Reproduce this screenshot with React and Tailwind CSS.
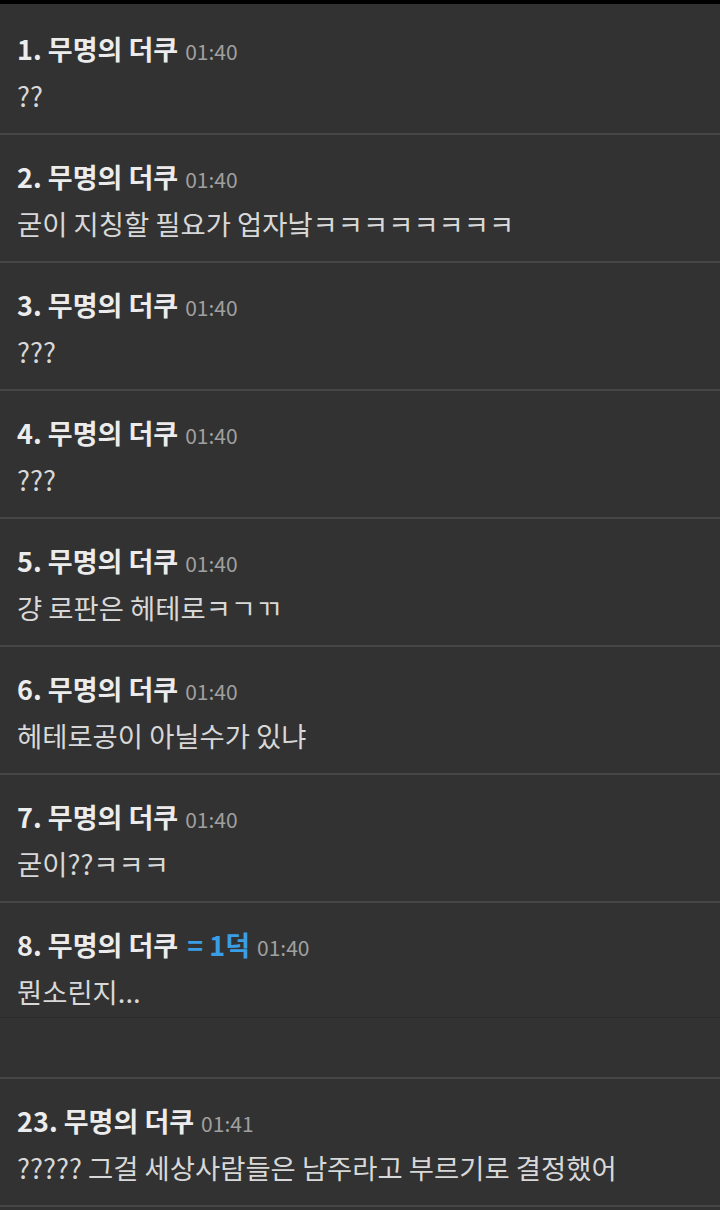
import React from "react";

const items = [
  { n: 1, time: "01:40", body: "??" },
  { n: 2, time: "01:40", body: "굳이 지칭할 필요가 업자낰ㅋㅋㅋㅋㅋㅋㅋㅋ" },
  { n: 3, time: "01:40", body: "???" },
  { n: 4, time: "01:40", body: "???" },
  { n: 5, time: "01:40", body: "걍 로판은 헤테로ㅋㄱㄲ" },
  { n: 6, time: "01:40", body: "헤테로공이 아닐수가 있냐" },
  { n: 7, time: "01:40", body: "굳이??ㅋㅋㅋ" },
];

const font = { fontFamily: '"Noto Sans CJK KR", "Noto Sans", sans-serif' };

function Item({ n, time, body, badge, short }) {
  return (
    <div
      className={
        short
          ? "pl-[17px] pt-[26px] pb-[10px] border-b border-[#2a2a2a]"
          : "pl-[17px] pt-[26px] pb-[22px] border-b-2 border-[#464646]"
      }
    >
      <div className="flex items-baseline leading-[32px] h-[32px] whitespace-nowrap">
        <span className="text-[27px] font-bold text-[#ececec]">{n}. 무명의 더쿠</span>
        {badge && (
          <span className="ml-[9px] text-[27px] font-bold text-[#3a9ee6]">= 1덕</span>
        )}
        <span className="ml-[7px] text-[21px] text-[#a0a0a0]">{time}</span>
      </div>
      <div className="mt-[14px] leading-[32px] h-[32px] text-[27.4px] text-[#d8d8d8] whitespace-nowrap">
        {body}
      </div>
    </div>
  );
}

export default function App() {
  return (
    <div className="w-[720px] h-[1210px] bg-[#323232] overflow-hidden" style={font}>
      <div className="h-[4px] bg-black" />
      <div className="h-[3px]" />
      {items.map((it) => (
        <Item key={it.n} {...it} />
      ))}
      <Item n={8} time="01:40" body="뭔소린지..." badge short />
      <div className="h-[61px] border-b-2 border-[#464646]" />
      <Item n={23} time="01:41" body="????? 그걸 세상사람들은 남주라고 부르기로 결정했어" />
    </div>
  );
}
